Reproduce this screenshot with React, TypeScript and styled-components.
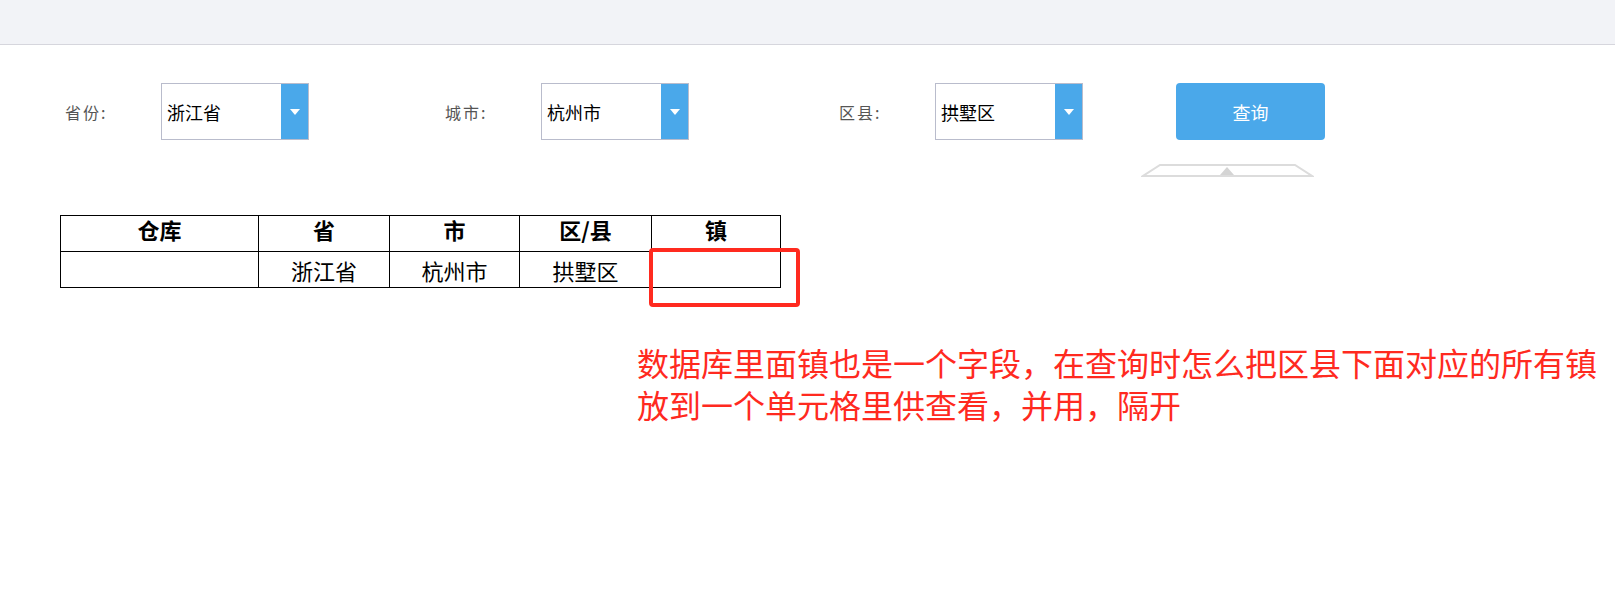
import React from "react";
import styled, { createGlobalStyle } from "styled-components";

const GlobalStyle = createGlobalStyle`
  html, body {
    margin: 0;
    padding: 0;
    background: #ffffff;
    font-family: "Noto Sans CJK SC", "Noto Sans", sans-serif;
  }
`;

const Page = styled.div`
  position: relative;
  width: 1615px;
  min-height: 610px;
`;

const TopBar = styled.div`
  height: 44px;
  background-color: #f2f3f7;
  border-bottom: 1px solid #d6d6dd;
`;

const FilterRow = styled.div`
  display: flex;
  align-items: flex-start;
  padding: 38px 0 0 65px;
`;

const Field = styled.div<{ $width: number }>`
  display: flex;
  align-items: center;
  width: ${(p) => p.$width}px;
  height: 57px;
`;

const Label = styled.span`
  width: 96px;
  font-size: 16px;
  color: #555;
  letter-spacing: 2px;
`;

const Select = styled.div`
  display: flex;
  width: 146px;
  height: 55px;
  border: 1px solid #b9bccc;
  background: #fff;
`;

const SelectValue = styled.div`
  flex: 1;
  display: flex;
  align-items: center;
  padding-left: 5px;
  font-size: 18px;
  color: #000;
`;

const SelectArrow = styled.div`
  width: 27px;
  display: flex;
  align-items: center;
  justify-content: center;
  background-color: #4aa8ea;
  &::after {
    content: "";
    border-left: 5px solid transparent;
    border-right: 5px solid transparent;
    border-top: 6px solid #ffffff;
  }
`;

const ButtonCol = styled.div`
  display: flex;
  flex-direction: column;
`;

const QueryButton = styled.button`
  width: 149px;
  height: 57px;
  border: none;
  border-radius: 4px;
  background-color: #4aa8ea;
  color: #fff;
  font-family: "Noto Sans CJK SC", sans-serif;
  font-size: 18px;
  cursor: pointer;
`;

const Handle = styled.svg`
  margin: 24px 0 0 -35px;
  display: block;
`;

const Table = styled.table`
  margin: 38px 0 0 60px;
  border-collapse: collapse;
  font-size: 22px;
  color: #000;
  th,
  td {
    border: 1px solid #000;
    padding: 0;
    text-align: center;
    line-height: 1;
  }
  th {
    height: 33px;
    font-weight: bold;
    vertical-align: top;
    padding-top: 2px;
  }
  td {
    height: 35px;
  }
`;

const Col = styled.col<{ $width: number }>`
  width: ${(p) => p.$width}px;
`;

const Note = styled.p`
  margin: 53px 0 0 637px;
  width: 980px;
  font-size: 32px;
  line-height: 42px;
  color: #ff2a1f;
`;

const Highlight = styled.div`
  position: absolute;
  left: 649px;
  top: 248px;
  width: 143px;
  height: 51px;
  border: 4px solid #ff2a1f;
  border-radius: 4px;
`;

const fields = [
  { label: "省份:", value: "浙江省", width: 380 },
  { label: "城市:", value: "杭州市", width: 394 },
  { label: "区县:", value: "拱墅区", width: 337 },
];

export default function App() {
  return (
    <Page>
      <GlobalStyle />
      <TopBar />
      <FilterRow>
        {fields.map((f) => (
          <Field key={f.label} $width={f.width}>
            <Label>{f.label}</Label>
            <Select>
              <SelectValue>{f.value}</SelectValue>
              <SelectArrow />
            </Select>
          </Field>
        ))}
        <ButtonCol>
          <QueryButton>查询</QueryButton>
          <Handle width="173" height="13" viewBox="0 0 173 13">
            <polygon
              points="19,1 154,1 171,12 2,12"
              fill="#fff"
              stroke="#dcdcdc"
              strokeWidth="2"
            />
            <polygon points="79,11 86,3 93,11" fill="#d4d4d4" />
          </Handle>
        </ButtonCol>
      </FilterRow>
      <Table>
        <colgroup>
          <Col $width={198} />
          <Col $width={131} />
          <Col $width={130} />
          <Col $width={132} />
          <Col $width={129} />
        </colgroup>
        <thead>
          <tr>
            <th>仓库</th>
            <th>省</th>
            <th>市</th>
            <th>区/县</th>
            <th>镇</th>
          </tr>
        </thead>
        <tbody>
          <tr>
            <td></td>
            <td>浙江省</td>
            <td>杭州市</td>
            <td>拱墅区</td>
            <td></td>
          </tr>
        </tbody>
      </Table>
      <Highlight />
      <Note>
        数据库里面镇也是一个字段，在查询时怎么把区县下面对应的所有镇放到一个单元格里供查看，并用，隔开
      </Note>
    </Page>
  );
}
